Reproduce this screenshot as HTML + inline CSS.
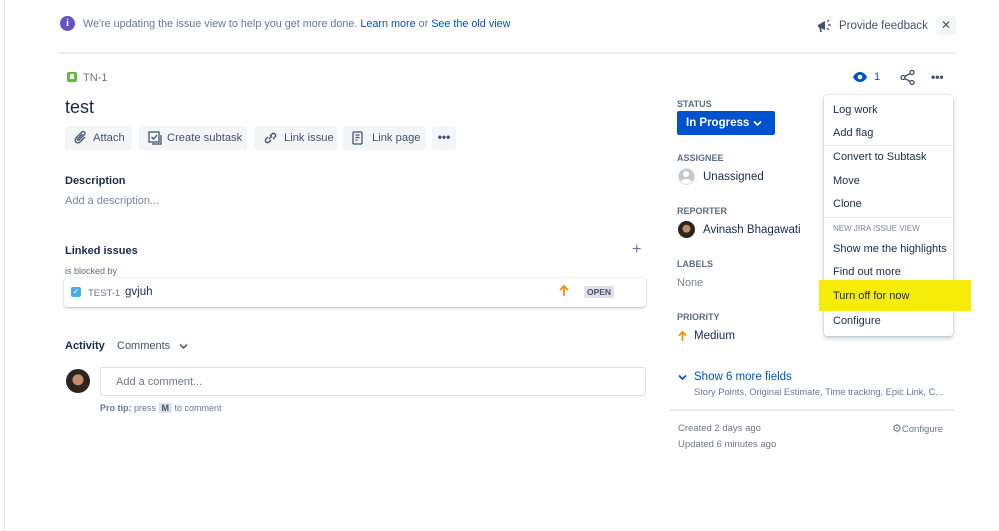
<!DOCTYPE html>
<html><head><meta charset="utf-8"><style>
*{margin:0;padding:0;box-sizing:border-box}
body{width:999px;height:531px;background:#fff;font-family:"Liberation Sans",sans-serif;color:#172b4d;position:relative;overflow:hidden;font-size:11px}
.a{position:absolute;white-space:nowrap}
.btn{position:absolute;top:126px;height:24px;background:#f4f5f7;border-radius:3px;font-size:11.2px;color:#42526e;line-height:24px;padding-left:28px}
.btn svg{position:absolute;left:9px;top:5px}
.lbl{position:absolute;font-size:9px;font-weight:bold;color:#5e6c84;left:677px}
.mi{position:absolute;left:833px;font-size:11px;color:#172b4d}
</style></head><body>
<div class="a" style="left:4px;top:0;width:1px;height:531px;background:#e4e5e8"></div>
<div class="a" style="left:60px;top:16px;width:15px;height:15px;border-radius:50%;background:#6554c0;color:#fff;font-size:10px;font-weight:bold;text-align:center;line-height:15px;font-family:'Liberation Serif',serif">i</div>
<div class="a" style="left:83px;top:18px;font-size:10.8px;color:#6b778c">We're updating the issue view to help you get more done. <span style="color:#0052cc">Learn more</span> or <span style="color:#0052cc">See the old view</span></div>
<svg class="a" style="left:816px;top:18px" width="16" height="16" viewBox="0 0 16 16"><path d="M2 7l7-4v9L2 9z" fill="#42526e"/><path d="M4 9l1 5" stroke="#42526e" stroke-width="1.6"/><path d="M11 4l2-2M12 7h3M11 10l2 2" stroke="#42526e" stroke-width="1.2"/></svg>
<div class="a" style="left:839px;top:20px;font-size:11.5px;color:#42526e">Provide feedback</div>
<div class="a" style="left:936px;top:16px;width:20px;height:19px;background:#f4f5f7;border-radius:3px;color:#42526e;text-align:center;line-height:19px;font-size:12px">✕</div>
<div class="a" style="left:59px;top:52px;width:897px;height:2px;background:#ebecf0"></div>

<div class="a" style="left:67px;top:72px;width:10px;height:10px;background:#63ba3c;border-radius:2px"><div style="position:absolute;left:3px;top:2px;width:4px;height:5px;background:#fff"></div></div>
<div class="a" style="left:83px;top:72px;font-size:11px;color:#6b778c">TN-1</div>
<div class="a" style="left:65px;top:97px;font-size:18px;font-weight:500;color:#172b4d">test</div>

<div class="btn" style="left:65px;width:67px"><svg width="14" height="14" viewBox="0 0 14 14"><path d="M11 6L6 11a2.5 2.5 0 01-4-4l6-6a1.7 1.7 0 012.5 2.5L5 9a.8.8 0 01-1.2-1.2L8.5 3" fill="none" stroke="#42526e" stroke-width="1.3"/></svg>Attach</div>
<div class="btn" style="left:139px;width:108px;padding-left:28px"><svg width="14" height="14" viewBox="0 0 14 14"><rect x="1" y="1" width="10" height="10" fill="none" stroke="#42526e" stroke-width="1.3"/><path d="M3.5 6l2 2 3.5-4" fill="none" stroke="#42526e" stroke-width="1.3"/><path d="M13 4v9H4" fill="none" stroke="#42526e" stroke-width="1.3"/></svg>Create subtask</div>
<div class="btn" style="left:254px;width:83px;padding-left:30px"><svg width="15" height="14" viewBox="0 0 15 14"><path d="M6 8l3-3M5 6L3 8a2.1 2.1 0 003 3l2-2M10 8l2-2a2.1 2.1 0 00-3-3L7 5" fill="none" stroke="#42526e" stroke-width="1.4"/></svg>Link issue</div>
<div class="btn" style="left:343px;width:83px;padding-left:29px"><svg width="12" height="14" viewBox="0 0 12 14"><rect x="1" y="1" width="9" height="12" rx="1" fill="none" stroke="#42526e" stroke-width="1.3"/><path d="M3.5 4h4M3.5 6.5h4M3.5 9h2" stroke="#42526e" stroke-width="1.2"/></svg>Link page</div>
<div class="btn" style="left:432px;width:24px;padding:0;text-align:center;font-weight:bold;font-size:12px;line-height:22px">•••</div>

<div class="a" style="left:65px;top:175px;font-size:11px;font-weight:bold">Description</div>
<div class="a" style="left:65px;top:195px;font-size:11px;color:#7a869a">Add a description...</div>
<div class="a" style="left:65px;top:245px;font-size:11px;font-weight:bold">Linked issues</div>
<div class="a" style="left:632px;top:241px;font-size:16px;color:#6b778c">+</div>
<div class="a" style="left:65px;top:266px;font-size:9px;color:#5e6c84">is blocked by</div>
<div class="a" style="left:64px;top:278px;width:582px;height:29px;border-radius:3px;box-shadow:0 1px 2px rgba(9,30,66,.25),0 0 1px rgba(9,30,66,.2)"></div>
<div class="a" style="left:71px;top:287px;width:10px;height:10px;background:#4bade8;border-radius:2px;color:#fff;font-size:8px;line-height:10px;text-align:center">✓</div>
<div class="a" style="left:88px;top:288px;font-size:9.5px;color:#6b778c">TEST-1</div>
<div class="a" style="left:125px;top:286px;font-size:11.5px">gvjuh</div>
<svg class="a" style="left:559px;top:284px" width="10" height="13" viewBox="0 0 10 13"><path d="M5 12V2M1 6l4-4 4 4" fill="none" stroke="#ff8b00" stroke-width="1.8"/></svg>
<div class="a" style="left:584px;top:286px;width:30px;height:12px;background:#dfe1e6;border-radius:2px;font-size:8.5px;font-weight:bold;color:#42526e;text-align:center;line-height:12px">OPEN</div>

<div class="a" style="left:65px;top:340px;font-size:11px;font-weight:bold">Activity</div>
<div class="a" style="left:117px;top:340px;font-size:11px;color:#42526e">Comments</div>
<svg class="a" style="left:179px;top:343px" width="9" height="7" viewBox="0 0 9 7"><path d="M1 1.5l3.5 3.5L8 1.5" fill="none" stroke="#42526e" stroke-width="1.5"/></svg>
<div class="a" style="left:66px;top:369px;width:24px;height:24px;border-radius:50%;background:radial-gradient(circle at 50% 45%,#c58a6a 0 30%,#2b2420 32%)"></div>
<div class="a" style="left:100px;top:367px;width:546px;height:29px;border:1px solid #dfe1e6;border-radius:3px;font-size:11px;color:#6b778c;padding:8px 15px">Add a comment...</div>
<div class="a" style="left:100px;top:403px;font-size:9px;color:#6b778c"><b>Pro tip:</b> press <span style="background:#dfe1e6;padding:0 3px;font-weight:bold;color:#42526e">M</span> to comment</div>

<svg class="a" style="left:852px;top:70px" width="16" height="14" viewBox="0 0 16 14"><path d="M1 7c2-4 5-5 7-5s5 1 7 5c-2 4-5 5-7 5S3 11 1 7z" fill="#0052cc"/><circle cx="8" cy="7" r="2.3" fill="#fff"/></svg>
<div class="a" style="left:874px;top:71px;font-size:11px;color:#0052cc">1</div>
<svg class="a" style="left:900px;top:70px" width="15" height="15" viewBox="0 0 15 15"><circle cx="3" cy="7.5" r="2" fill="none" stroke="#42526e" stroke-width="1.3"/><circle cx="12" cy="2.5" r="2" fill="none" stroke="#42526e" stroke-width="1.3"/><circle cx="12" cy="12.5" r="2" fill="none" stroke="#42526e" stroke-width="1.3"/><path d="M4.8 6.5l5.4-3M4.8 8.5l5.4 3" stroke="#42526e" stroke-width="1.3"/></svg>
<div class="a" style="left:931px;top:70px;font-size:12px;font-weight:bold;color:#42526e">•••</div>

<div class="lbl" style="top:99px">STATUS</div>
<div class="a" style="left:677px;top:111px;width:98px;height:24px;background:#0052cc;border-radius:2px;color:#fff;font-size:11.5px;font-weight:bold;line-height:24px;padding-left:9px">In Progress</div>
<svg class="a" style="left:753px;top:120px" width="9" height="7" viewBox="0 0 9 7"><path d="M1 1.5l3.5 3.5L8 1.5" fill="none" stroke="#fff" stroke-width="1.6"/></svg>
<div class="lbl" style="top:153px">ASSIGNEE</div>
<div class="a" style="left:678px;top:168px;width:17px;height:17px;border-radius:50%;background:#c1c7d0;border:1.5px solid #dfe1e6;overflow:hidden"><div style="position:absolute;left:4px;top:2px;width:6px;height:6px;border-radius:50%;background:#fff"></div><div style="position:absolute;left:1px;top:10px;width:12px;height:8px;border-radius:50%;background:#fff"></div></div>
<div class="a" style="left:703px;top:171px;font-size:11.5px">Unassigned</div>
<div class="lbl" style="top:206px">REPORTER</div>
<div class="a" style="left:678px;top:221px;width:17px;height:17px;border-radius:50%;background:radial-gradient(circle at 50% 45%,#c58a6a 0 30%,#2b2420 32%)"></div>
<div class="a" style="left:703px;top:224px;font-size:11.5px">Avinash Bhagawati</div>
<div class="lbl" style="top:259px">LABELS</div>
<div class="a" style="left:677px;top:277px;font-size:11px;color:#7a869a">None</div>
<div class="lbl" style="top:312px">PRIORITY</div>
<svg class="a" style="left:678px;top:330px" width="9" height="12" viewBox="0 0 9 12"><path d="M4.5 11V2M1 5.5l3.5-3.5 3.5 3.5" fill="none" stroke="#ff8b00" stroke-width="1.7"/></svg>
<div class="a" style="left:694px;top:330px;font-size:11.5px">Medium</div>
<svg class="a" style="left:678px;top:374px" width="9" height="7" viewBox="0 0 9 7"><path d="M1 1.5l3.5 3.5L8 1.5" fill="none" stroke="#0052cc" stroke-width="1.8"/></svg>
<div class="a" style="left:694px;top:371px;font-size:11.5px;color:#0052cc">Show 6 more fields</div>
<div class="a" style="left:694px;top:387px;font-size:9.3px;color:#6b778c">Story Points, Original Estimate, Time tracking, Epic Link, C...</div>
<div class="a" style="left:670px;top:409px;width:284px;height:2px;background:#ebecf0"></div>
<div class="a" style="left:678px;top:423px;font-size:9.5px;color:#6b778c">Created 2 days ago</div>
<div class="a" style="left:678px;top:439px;font-size:9.5px;color:#6b778c">Updated 6 minutes ago</div>
<div class="a" style="left:892px;top:422px;font-size:9.5px;color:#6b778c"><span style="font-size:11px">⚙</span>Configure</div>

<div class="a" style="left:824px;top:95px;width:129px;height:241px;background:#fff;border-radius:3px;box-shadow:0 2px 5px rgba(9,30,66,.25),0 0 1px rgba(9,30,66,.3)"></div>
<div class="a" style="left:824px;top:145px;width:129px;height:1px;background:#ebecf0"></div>
<div class="a" style="left:824px;top:217px;width:129px;height:1px;background:#ebecf0"></div>
<div class="a" style="left:819px;top:280px;width:152px;height:31px;background:#f6ec0a"></div>
<div class="mi" style="top:104px">Log work</div>
<div class="mi" style="top:127px">Add flag</div>
<div class="mi" style="top:151px">Convert to Subtask</div>
<div class="mi" style="top:175px">Move</div>
<div class="mi" style="top:198px">Clone</div>
<div class="mi" style="top:224px;font-size:8px;color:#7a869a">NEW JIRA ISSUE VIEW</div>
<div class="mi" style="top:243px">Show me the highlights</div>
<div class="mi" style="top:266px">Find out more</div>
<div class="mi" style="top:290px">Turn off for now</div>
<div class="mi" style="top:315px">Configure</div>
</body></html>
